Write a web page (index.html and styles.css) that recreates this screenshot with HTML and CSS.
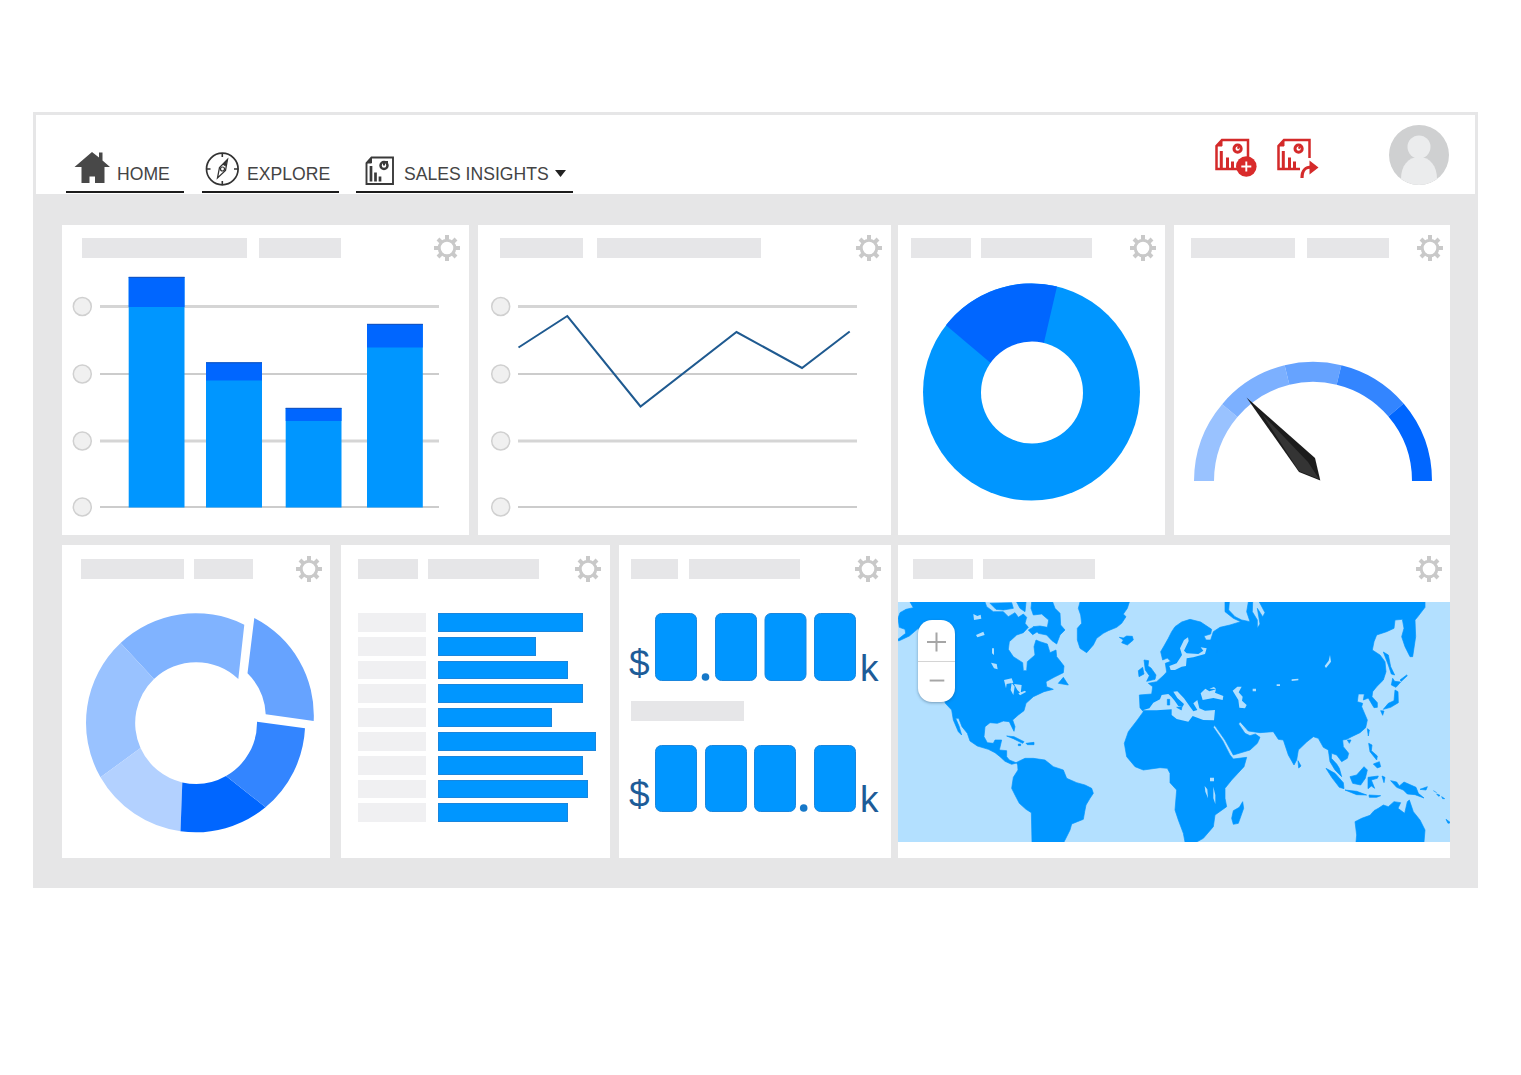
FILE: index.html
```html
<!DOCTYPE html>
<html lang="en">
<head>
<meta charset="utf-8">
<title>Sales Insights</title>
<link rel="stylesheet" href="styles.css">
</head>
<body>
<svg class="defs" width="0" height="0" aria-hidden="true">
  <symbol id="gear" viewBox="-13 -13 26 26">
    <circle r="7.8" fill="none" stroke="#c9c9c9" stroke-width="3"/>
    <g stroke="#c9c9c9" stroke-width="4">
      <path d="M0-8.5V-13M0 8.500V13M-8.500 0H-13M8.500 0H13"/>
      <path d="M6-6L9-9M-6-6L-9-9M6 6L9 9M-6 6L-9 9"/>
    </g>
  </symbol>
</svg>

<main class="app">
  <header class="topbar">
    <nav class="nav">
      <a class="nav-item nav-home">
        <svg width="36" height="32" viewBox="74 151 36 32"><path fill="#484848" d="M92 152L99 157.500V152.500H102.500V160.500L110 167H104.500V183H95V176.500H89.500V183H81.500V167H74.500Z"/></svg>
        <span>HOME</span>
      </a>
      <a class="nav-item nav-explore">
        <svg width="34" height="34" viewBox="205 152 34 34" fill="none" stroke="#333"><circle cx="222.300" cy="169" r="15.800" stroke-width="1.700"/><path stroke-width="1.600" d="M222.300 153V157M222.300 181V185M206.500 169H210.500M234 169H238"/><path stroke-width="1.300" d="M227.500 159.500L225.500 170.500L217.500 178L219.500 167.500Z"/><circle cx="222.500" cy="169" r="2" stroke-width="1.200"/><path fill="#333" stroke="none" d="M228 158.500L225.500 166.500L222.500 164.500Z"/></svg>
        <span>EXPLORE</span>
      </a>
      <a class="nav-item nav-insights">
        <svg width="29" height="29" viewBox="365 156.500 29 29" fill="none" stroke="#3a3a3a"><path stroke-width="1.900" d="M371.500 158H393V184.500H366.500V163.500Z"/><path fill="#3a3a3a" d="M371.500 158V163.500H366.500Z"/><path stroke-width="2.700" d="M371 166.500V182M375.500 173V182M380 177V182"/><circle cx="384" cy="166" r="3.500" stroke-width="2.500"/><path stroke-width="2" d="M384 166V162.500H388"/></svg>
        <span>SALES INSIGHTS</span>
        <svg class="caret" width="11" height="7" viewBox="0 0 11 7"><path fill="#222" d="M0 0H11L5.500 7Z"/></svg>
      </a>
    </nav>
    <div class="actions">
      <svg width="48" height="46" viewBox="1212 135 48 46" fill="none" stroke="#d42a2a"><path stroke-width="2.500" d="M1222 140H1248V169H1216.500V146Z"/><path fill="#d42a2a" d="M1222 140V146H1216.500Z"/><path stroke-width="3" d="M1221.300 151V168M1227.500 157.500V168M1232.500 161.500V168"/><circle cx="1237.600" cy="148.700" r="3.600" stroke-width="3"/><path stroke-width="2" d="M1237.600 148.700L1240 145.500"/><circle cx="1246.300" cy="166.500" r="10.300" fill="#d92b2b" stroke="none"/><path stroke="#fff" stroke-width="1.900" d="M1241.300 166.500H1251.300M1246.300 161.500V171.500"/></svg>
      <svg class="share" width="48" height="46" viewBox="1212 135 48 46" fill="none" stroke="#d42a2a"><path stroke-width="2.500" d="M1247.500 158V140H1222L1216.500 146V169H1238"/><path fill="#d42a2a" d="M1222 140V146H1216.500Z"/><path stroke-width="3" d="M1221.300 151V168M1227.500 157.500V168M1232.500 161.500V168"/><circle cx="1236.600" cy="148.700" r="3.600" stroke-width="3"/><path stroke-width="2" d="M1236.600 148.700L1239 145.500"/><path stroke-width="3.200" d="M1240 178C1240 170 1243 167 1250 167"/><path fill="#d42a2a" stroke="none" d="M1247.500 160.500L1256.500 167.500L1247.500 174.500Z"/></svg>
      <svg class="avatar" width="60" height="60" viewBox="0 0 60 60"><clipPath id="face"><circle cx="30" cy="30" r="30"/></clipPath><g clip-path="url(#face)"><path fill="#cfd0d1" d="M0 0H60V60H0Z"/><circle cx="30" cy="22" r="11.500" fill="#ebeced"/><path fill="#ebeced" d="M12 54C12 41 19 32 30 32S48 41 48 54C42 58 36 60 30 60S18 58 12 54Z"/></g></svg>
    </div>
  </header>

  <section class="board">
    <div class="row">
      <article class="card card-bars">
        <div class="card-head"><i class="tag"></i><i class="tag"></i><svg class="gear"><use href="#gear"/></svg></div>
        <svg width="407" height="265" viewBox="62 270 407 265">
          <g fill="none" stroke="#d5d5d5"><path stroke-width="3" d="M100 306.500H439M100 441H439"/><path stroke="#bcbcbc" stroke-width="1.500" d="M100 374H439M100 507H439"/></g>
          <g fill="#f0f0f0" stroke="#d0d0d0" stroke-width="1.500"><circle cx="82.300" cy="306.500" r="9"/><circle cx="82.300" cy="374" r="9"/><circle cx="82.300" cy="441" r="9"/><circle cx="82.300" cy="507" r="9"/></g>
          <g fill="#0096ff"><path d="M128.700 277H184.500V507.500H128.700ZM206 362.500H262V507.500H206ZM285.700 408H341.500V507.500H285.700ZM367 324H422.800V507.500H367Z"/></g>
          <path fill="#0066ff" d="M128.700 277H184.500V307H128.700ZM206 362.500H262V380.500H206ZM285.700 408H341.500V421H285.700ZM367 324H422.800V347.500H367Z"/>
          <path fill="none" stroke="#1650b8" d="M128.700 277.300H184.500M206 362.800H262M285.700 408.300H341.500M367 324.300H422.800"/>
        </svg>
      </article>

      <article class="card card-line">
        <div class="card-head"><i class="tag"></i><i class="tag"></i><svg class="gear"><use href="#gear"/></svg></div>
        <svg width="413" height="265" viewBox="478 270 413 265">
          <g fill="none" stroke="#d5d5d5"><path stroke-width="3" d="M518 306.500H857M518 441H857"/><path stroke="#bcbcbc" stroke-width="1.500" d="M518 374H857M518 507H857"/></g>
          <g fill="#f0f0f0" stroke="#d0d0d0" stroke-width="1.500"><circle cx="500.700" cy="306.500" r="9"/><circle cx="500.700" cy="374" r="9"/><circle cx="500.700" cy="441" r="9"/><circle cx="500.700" cy="507" r="9"/></g>
          <polyline fill="none" stroke="#1f5a90" stroke-width="2" points="518.500,347.500 567.300,316 640.500,406.500 736.500,332 802,368 849.700,331.500"/>
        </svg>
      </article>

      <article class="card card-share">
        <div class="card-head"><i class="tag"></i><i class="tag"></i><svg class="gear"><use href="#gear"/></svg></div>
        <svg width="267" height="265" viewBox="898 270 267 265">
          <circle cx="1031.500" cy="392" r="108.500" fill="#0096ff"/>
          <path fill="#0066ff" d="M1012 381L946 325.300A108.500 108.500 0 0 1 1057 286.500L1035 381Z"/>
          <circle cx="1032" cy="392.500" r="51" fill="#fff"/>
        </svg>
      </article>

      <article class="card card-gauge">
        <div class="card-head"><i class="tag"></i><i class="tag"></i><svg class="gear"><use href="#gear"/></svg></div>
        <svg width="276" height="265" viewBox="1174 270 276 265">
          <g fill="none" stroke-width="20">
            <path stroke="#99c2ff" d="M1204 481A109.300 109.300 0 0 1 1229.800 410.600"/>
            <path stroke="#7cb0ff" d="M1229.800 410.600A109.300 109.300 0 0 1 1287 375"/>
            <path stroke="#66a3ff" d="M1287 375A109.300 109.300 0 0 1 1339 375"/>
            <path stroke="#3385ff" d="M1339 375A109.300 109.300 0 0 1 1396 410"/>
            <path stroke="#0066ff" d="M1396 410A109.300 109.300 0 0 1 1422 481"/>
          </g>
          <path fill="#1c1c1c" d="M1246.500 397.500L1315 458L1320.300 480.500L1299 472Z"/>
          <path fill="#343434" d="M1262 414L1308 462L1319 479L1299 471Z"/>
        </svg>
      </article>
    </div>

    <div class="row row-low">
      <article class="card card-mix">
        <div class="card-head"><i class="tag"></i><i class="tag"></i><svg class="gear"><use href="#gear"/></svg></div>
        <svg width="268" height="256" viewBox="62 602 268 256">
          <path fill="#80b3ff" d="M120.600 643A109.500 109.500 0 0 1 244.300 624.700L238.300 679.100A61 61 0 0 0 154 679Z"/>
          <path fill="#99c2ff" d="M120.600 643A109.500 109.500 0 0 0 100.500 777.300L140.500 748A61 61 0 0 1 154 679Z"/>
          <path fill="#b3d1ff" d="M100.500 777.300A109.500 109.500 0 0 0 180.500 831.200L182.300 782.400A61 61 0 0 1 140.500 748Z"/>
          <path fill="#0066ff" d="M180.500 831.200A109.500 109.500 0 0 0 265.500 807.200L226 776A61 61 0 0 1 182.300 782.400Z"/>
          <path fill="#3385ff" d="M265.500 807.200A109.500 109.500 0 0 0 305 728.300L257 721.700A61 61 0 0 1 226 776Z"/>
          <path fill="#66a3ff" d="M254.300 618A109.500 109.500 0 0 1 313.700 721L265.700 714.300A61 61 0 0 0 247.500 673.300Z"/>
        </svg>
      </article>

      <article class="card card-rank">
        <div class="card-head"><i class="tag"></i><i class="tag"></i><svg class="gear"><use href="#gear"/></svg></div>
        <ul class="rank">
          <li><i></i><b style="width:145px"></b></li>
          <li><i></i><b style="width:98px"></b></li>
          <li><i></i><b style="width:130px"></b></li>
          <li><i></i><b style="width:145px"></b></li>
          <li><i></i><b style="width:114px"></b></li>
          <li><i></i><b style="width:158px"></b></li>
          <li><i></i><b style="width:145px"></b></li>
          <li><i></i><b style="width:150px"></b></li>
          <li><i></i><b style="width:130px"></b></li>
        </ul>
      </article>

      <article class="card card-totals">
        <div class="card-head"><i class="tag"></i><i class="tag"></i><svg class="gear"><use href="#gear"/></svg></div>
        <svg width="272" height="256" viewBox="619 602 272 256">
          <g fill="#0096ff" stroke="#1a86dd" stroke-width="1"><rect x="655.500" y="613.500" width="41" height="67" rx="6"/><rect x="715.500" y="613.500" width="41" height="67" rx="6"/><rect x="765" y="613.500" width="41" height="67" rx="6"/><rect x="814.500" y="613.500" width="41" height="67" rx="6"/><rect x="655.500" y="745.500" width="41" height="66" rx="6"/><rect x="705.500" y="745.500" width="41" height="66" rx="6"/><rect x="754.500" y="745.500" width="41" height="66" rx="6"/><rect x="814.500" y="745.500" width="41" height="66" rx="6"/></g>
          <g fill="#1678c8"><circle cx="705.500" cy="677" r="3.800"/><circle cx="803.700" cy="808" r="3.800"/></g>
          <path fill="#e6e6e8" d="M631 701H744V721H631Z"/>
          <g class="unit"><text x="629" y="675.500">$</text><text x="860" y="680.500">k</text><text x="629" y="807">$</text><text x="860" y="811.500">k</text></g>
        </svg>
      </article>

      <article class="card card-map">
        <div class="card-head"><i class="tag"></i><i class="tag"></i><svg class="gear"><use href="#gear"/></svg></div>
        <div class="map">
          <svg width="552" height="240" viewBox="24 186 1656 720">
            <path fill="#b3e0ff" d="M24 186H1680V906H24Z"/>
            <g class="land">
              <path d="M60 186L70 203L48 208L30 218L24 235L28 262L45 268L47 280L24 298L26 303L58 288L85 265L100 300L130 400L160 470L166 490L185 510L190 540L205 575L215 585L207 558L197 535L206 535L216 560L232 580L240 603L262 618L295 628L315 638L330 650L345 664L365 673L380 669L383 675L384 690L370 712L365 745L375 765L388 790L408 808L424 818L426 906H522L540 870L545 852L562 845L580 838L584 815L588 795L600 775L610 760L605 745L585 735L560 728L530 715L520 690L490 680L465 660L430 655L405 655L390 662L378 668L358 660L350 650V632L328 630L335 600L315 600L310 610L292 608L282 590L285 560L300 548L322 550L340 543L358 545L365 560L372 574L375 560L368 540L385 525L402 512L408 490L430 470L462 455L490 448L470 440L468 425L492 412L520 398L522 378L508 360L500 350L498 330L480 338L472 312L450 305L438 300L432 320L435 345L412 365L410 392L400 392L398 368L370 350L355 328L358 305L380 285L400 278L415 262L405 250L410 232L400 222L385 232L375 218L355 230L340 215L310 215L290 200L285 186Z"/>
              <path d="M425 186H488L495 205L510 220L512 255L525 270L510 285L500 312L486 302L470 285L445 280L430 260L450 258L472 262L476 240L455 222L430 225L423 205ZM300 190L365 188L370 205L340 210L318 208ZM380 186H408L405 215L390 205ZM415 270L432 260L442 275L428 284ZM505 430L520 412L535 435ZM570 186H718L712 205L700 222L708 230L695 250L680 262L655 272L640 280L620 295L610 315L590 338L570 325L562 300L562 265L575 250L572 225L565 205ZM688 292L700 294L710 288L727 289L730 300L712 315L695 308L700 300ZM350 588L372 590L402 605L398 610L370 596ZM408 610L432 607V614L412 614ZM385 612H392V617H385Z"/>
              <path d="M762 360L776 362L774 378L783 384L798 405L795 418L770 424L778 407L766 390ZM745 392L758 382L762 402L747 410Z"/>
            </g>
            <g fill="#b3e0ff">
              <path d="M250 222L262 228L272 224L274 236L252 240ZM258 285L280 275L284 285L262 292ZM306 325H312V345L306 340ZM303 368L320 372L323 388L312 385ZM342 420L365 415L370 428L350 432L348 445ZM365 428L374 440L370 465L362 450ZM372 432L395 435L392 460L382 450ZM385 460L405 452L408 456L390 466Z"/>
            </g>
            <g transform="translate(840 0)">
              <path class="land" d="M-92 465L-55 462L-52 440L-65 430L-40 425L-18 405L-10 396L-14 370L2 364L-8 354L-22 360L-28 335L-18 318L-5 295L5 275L15 260L35 246L60 238L92 246L125 268L122 282L102 288L108 300L122 300L130 275L150 262L180 255L212 245L190 235L165 215V186H178L176 210L195 230L215 240L240 245L230 215L235 186H248L247 215L262 240L262 265L270 252L262 205L278 230L285 218L268 186H765V202L742 232L735 240L737 290L728 350H720L705 320L695 290L702 265L697 238L675 240L672 265L650 275L620 285L612 305L607 330L630 345L645 365L648 395L640 420L620 440L608 455L606 470L622 488L622 502L612 503L603 488L595 474L580 480L583 462L565 462L562 485L578 490L575 500L592 540L587 563L570 578L545 590L530 598L518 600L520 620L536 640L532 655L515 665L500 645L485 640L484 655L500 672L508 685L515 710L495 690L480 665L475 630L460 622L445 595L430 590L410 606L385 630L380 660L372 675L355 645L340 600L325 598L310 575L270 578L235 573L210 545L206 552L225 580L240 587L256 582L270 592L262 610L240 630L190 645L165 600L134 556L130 562L158 602L180 645L190 657L230 652L222 680L185 720L165 745V775L170 800L135 825L130 860L100 895L80 906H45L40 880L25 840L15 810L20 750L0 728V700L-8 685L-30 683L-80 690L-105 680L-130 650L-137 610L-125 575L-98 540L-80 515L-90 503Z"/>
              <g fill="#b3e0ff">
                <path d="M-82 511L-62 505L-50 488L-30 478L-25 465L-5 462L4 470L14 482L25 498L38 500L42 492L22 474L10 455L22 454L42 475L60 500L70 514L82 510L70 490L82 480L88 505L105 512L135 510L132 541L100 540L68 528L55 545L20 537L5 525V508L-40 511Z"/>
                <path d="M92 460L106 446L118 454L138 448L135 458L160 468L158 480L130 474L98 480ZM118 446L132 441L138 447ZM188 452L202 440L215 440L206 457L218 470L216 482L230 495L225 505L208 503L205 480ZM248 446H258V454H248ZM480 345L483 365L468 384L464 378L476 362ZM365 418L385 416V421L365 423ZM320 433H330V438H320Z"/>
                <path d="M-2 378L20 370L36 345L30 325L42 300L54 292L56 303L42 332L50 340L85 342L100 332L92 322L110 325L105 342L70 352L50 355L48 378L35 380L15 390L2 390Z"/>
                <path d="M120 713H132V724H120ZM104 738L112 748L114 775L106 755ZM130 740L136 765V792L130 775Z"/>
              </g>
              <g class="land">
                <path d="M-8 478H-1V495H-8ZM20 502L36 500L34 510ZM75 543L90 540L86 546ZM140 330L144 334L140 338ZM640 336L655 345L662 380L674 405L664 402L655 375ZM668 415L674 424L692 426L678 442L664 435ZM675 450L684 455L685 488L662 502L640 508L655 490L672 482ZM632 512L642 513L638 526ZM592 566L598 570L595 588ZM532 600H543L538 610ZM596 610L606 615L604 632L622 648L620 660L600 635ZM610 672L628 665L632 680L622 684ZM384 662L393 678L386 684ZM218 785L221 805L205 850L190 853L185 835L190 812L208 802Z"/>
                <path d="M468 685L495 700L520 728L522 746L508 742L485 712ZM525 750L560 754L590 765L560 764ZM597 765L632 767L620 772H598ZM540 710L560 705L582 680L592 690L586 715L572 735L548 730ZM594 712L625 708L622 715L604 720L614 745L604 738L594 746ZM636 708L645 712L642 728ZM662 722L680 726L688 738L702 726L738 742L745 760L762 774L735 764L712 762L700 750L680 742ZM750 748L772 740L768 750ZM790 752L800 758M800 762L810 766L806 769ZM815 770L824 776L818 776ZM828 838L842 848L834 850Z"/>
                <path d="M558 906L560 885L555 845L575 835L600 826L612 812L625 805L640 795L655 800L672 785L692 788L684 805L704 820L712 785L718 780L730 815L750 840L765 870L762 906Z"/>
                <path d="M690 420L710 405L712 407L694 424Z"/>
              </g>
            </g>
          </svg>
          <div class="zoom">
            <svg width="37" height="41" viewBox="0 0 37 41"><path d="M9 22H28M18.500 12.500V31.500"/></svg>
            <svg width="37" height="41" viewBox="0 0 37 41"><path d="M11.500 19H26.500"/></svg>
          </div>
        </div>
      </article>
    </div>
  </section>
</main>
</body>
</html>
```
FILE: styles.css
```css
* { box-sizing: border-box; }

body {
  margin: 0;
  min-height: 1075px;
  background: #fff;
  font-family: "Liberation Sans", Arial, sans-serif;
}

svg { display: block; flex: none; }
.defs { position: absolute; }

.app {
  width: 1445px;
  height: 776px;
  margin: 112px 0 0 33px;
  padding: 3px 3px 0;
  background: #e6e6e7;
  display: flow-root;
}

.topbar {
  display: flex;
  align-items: flex-end;
  justify-content: space-between;
  height: 79px;
  padding: 0 26px 1px 30px;
  background: #fff;
}

.nav { display: flex; }

.nav-item {
  display: flex;
  align-items: flex-end;
  height: 45px;
  border-bottom: 2px solid #1c1c1c;
  color: #444;
  font-size: 17.6px;
  line-height: 20px;
  white-space: nowrap;
}
.nav-item span { margin-bottom: 7px; }

.nav-home { width: 118px; padding-left: 8px; gap: 7px; }
.nav-home svg { margin-bottom: 8px; }
.nav-explore { width: 137px; margin-left: 18px; padding-left: 3px; gap: 8px; }
.nav-explore svg { margin-bottom: 5px; }
.nav-insights { width: 217px; margin-left: 17px; padding-left: 9px; gap: 10px; }
.nav-insights svg { margin-bottom: 6px; }
.nav-insights .caret { margin: 0 0 14px -4px; }

.actions { display: flex; align-items: flex-end; }
.actions svg { margin-bottom: 12px; }
.actions .share { margin-left: 14px; }
.actions .avatar { margin: 0 0 8px 67px; }

.board { padding: 31px 25px 0 26px; }

.row { display: flex; height: 310px; }
.row-low { height: 313px; margin-top: 10px; }

.card { flex: none; background: #fff; }

.card-head {
  display: flex;
  height: 45px;
  padding-top: 10px;
}
.row-low .card-head { height: 57px; padding-top: 11px; }

.tag {
  height: 20px;
  margin-top: 3px;
  background: #e6e6e8;
}
.gear { width: 26px; height: 26px; margin-left: auto; }

.card-bars { width: 407px; }
.card-bars .card-head { padding-left: 20px; padding-right: 9px; gap: 12px; }
.card-bars .tag:nth-child(1) { width: 165px; }
.card-bars .tag:nth-child(2) { width: 82px; }

.card-line { width: 413px; margin-left: 9px; }
.card-line .card-head { padding-left: 22px; padding-right: 9px; gap: 14px; }
.card-line .tag:nth-child(1) { width: 83px; }
.card-line .tag:nth-child(2) { width: 164px; }

.card-share { width: 267px; margin-left: 7px; }
.card-share .card-head { padding-left: 13px; padding-right: 9px; gap: 10px; }
.card-share .tag:nth-child(1) { width: 60px; }
.card-share .tag:nth-child(2) { width: 111px; }

.card-gauge { width: 276px; margin-left: 9px; }
.card-gauge .card-head { padding-left: 17px; padding-right: 7px; gap: 12px; }
.card-gauge .tag:nth-child(1) { width: 104px; }
.card-gauge .tag:nth-child(2) { width: 82px; }

.card-mix { width: 268px; }
.card-mix .card-head { padding-left: 19px; padding-right: 8px; gap: 10px; }
.card-mix .tag:nth-child(1) { width: 103px; }
.card-mix .tag:nth-child(2) { width: 59px; }

.card-rank { width: 269px; margin-left: 11px; }
.card-rank .card-head { padding-left: 17px; padding-right: 9px; gap: 10px; }
.card-rank .tag:nth-child(1) { width: 60px; }
.card-rank .tag:nth-child(2) { width: 111px; }

.card-totals { width: 272px; margin-left: 9px; }
.card-totals .card-head { padding-left: 12px; padding-right: 10px; gap: 11px; }
.card-totals .tag:nth-child(1) { width: 47px; }
.card-totals .tag:nth-child(2) { width: 111px; }

.card-map { width: 552px; margin-left: 7px; }
.card-map .card-head { padding-left: 15px; padding-right: 8px; gap: 10px; }
.card-map .tag:nth-child(1) { width: 60px; }
.card-map .tag:nth-child(2) { width: 112px; }

.rank {
  display: grid;
  grid-auto-rows: 18.8px;
  row-gap: 5px;
  margin: 0;
  padding: 11px 0 0 17px;
  list-style: none;
}
.rank li { display: flex; gap: 12px; }
.rank i { width: 68px; background: #f0f0f2; }
.rank b { background: #0096ff; border: 1px solid #1a86dd; }

.unit { fill: #1d5c98; font-size: 37px; }

.map { position: relative; }
.land { fill: #0096ff; stroke: #0096ff; stroke-width: 2; }

.zoom {
  position: absolute;
  left: 20px;
  top: 18px;
  width: 37px;
  height: 82px;
  border-radius: 14px;
  background: #fff;
  box-shadow: 0 1px 3px rgba(40, 70, 100, .45);
}
.zoom svg { fill: none; stroke: #a6a6a6; stroke-width: 2; }
.zoom svg + svg { border-top: 1px solid #d4d4d4; }
```
